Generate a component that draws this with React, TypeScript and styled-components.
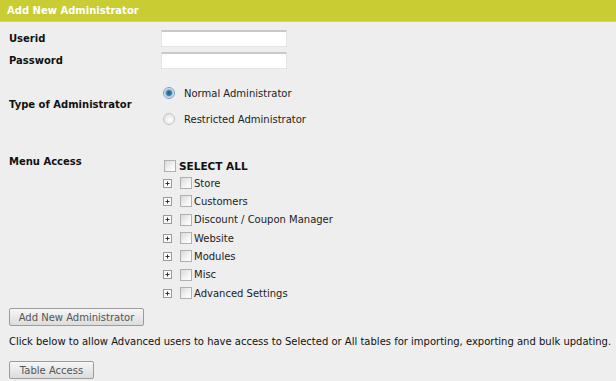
import React, { useState } from 'react'
import styled, { createGlobalStyle } from 'styled-components'

const GlobalStyle = createGlobalStyle`
  html, body {
    margin: 0;
    padding: 0;
    background: #eeeeee;
  }
  body {
    font-family: Tahoma, "DejaVu Sans", Verdana, sans-serif;
    font-size: 10px;
    color: #1a1a1a;
  }
`

const MENU_ITEMS = [
  'Store',
  'Customers',
  'Discount / Coupon Manager',
  'Website',
  'Modules',
  'Misc',
  'Advanced Settings'
]

export default function App() {
  const [adminType, setAdminType] = useState<'normal' | 'restricted'>('normal')
  const [checked, setChecked] = useState<Record<string, boolean>>({})

  const toggle = (key: string) => {
    setChecked(prev => ({ ...prev, [key]: !prev[key] }))
  }

  return (
    <Page>
      <GlobalStyle />
      <TitleBar>Add New Administrator</TitleBar>

      <Form>
        <Row $top={8}>
          <Label>Userid</Label>
          <TextInput type="text" />
        </Row>

        <Row $top={5}>
          <Label>Password</Label>
          <TextInput type="password" />
        </Row>

        <Row $top={11}>
          <Label $lift={4}>Type of Administrator</Label>
          <Field>
            <RadioLine onClick={() => setAdminType('normal')}>
              <Radio $checked={adminType === 'normal'} />
              Normal Administrator
            </RadioLine>
            <RadioLine onClick={() => setAdminType('restricted')}>
              <Radio $checked={adminType === 'restricted'} />
              Restricted Administrator
            </RadioLine>
          </Field>
        </Row>

        <Row $top={23} $alignTop>
          <Label $lineHeight={13}>Menu Access</Label>
          <Field $padTop={2}>
            <SelectAllLine onClick={() => toggle('all')}>
              <CheckBox $checked={!!checked.all} />
              SELECT ALL
            </SelectAllLine>
            {MENU_ITEMS.map(item => (
              <TreeLine key={item}>
                <Expander>
                  <svg width="9" height="9" viewBox="0 0 9 9">
                    <rect x="0.5" y="0.5" width="8" height="8" fill="#fafafa" stroke="#9a9a9a" />
                    <path d="M2.5 4.5h4M4.5 2.5v4" stroke="#333" strokeWidth="1" />
                  </svg>
                </Expander>
                <TreeItem onClick={() => toggle(item)}>
                  <CheckBox $checked={!!checked[item] || !!checked.all} />
                  {item}
                </TreeItem>
              </TreeLine>
            ))}
          </Field>
        </Row>

        <Button $top={6} $width={135}>Add New Administrator</Button>

        <Note>
          Click below to allow Advanced users to have access to Selected or All tables for importing, exporting and bulk updating.
        </Note>

        <Button $top={12} $width={85}>Table Access</Button>
      </Form>
    </Page>
  )
}

const Page = styled.div`
  width: 616px;
  min-height: 381px;
  background: #eeeeee;
`

const TitleBar = styled.div`
  height: 21px;
  line-height: 21px;
  padding-left: 7px;
  background: #c9cd33;
  border-bottom: 1px solid #d3d56a;
  color: #ffffff;
  font-weight: bold;
  font-size: 10px;
`

const Form = styled.div`
  display: flex;
  flex-direction: column;
  align-items: flex-start;
  padding-left: 9px;
`

const Row = styled.div<{ $top: number; $alignTop?: boolean }>`
  display: flex;
  align-items: ${p => (p.$alignTop ? 'flex-start' : 'center')};
  margin-top: ${p => p.$top}px;
`

const Label = styled.div<{ $lineHeight?: number; $lift?: number }>`
  width: 152px;
  font-weight: bold;
  color: #111;
  line-height: ${p => (p.$lineHeight ? `${p.$lineHeight}px` : 'normal')};
  padding-bottom: ${p => p.$lift || 0}px;
`

const Field = styled.div<{ $padTop?: number }>`
  display: flex;
  flex-direction: column;
  padding-top: ${p => p.$padTop || 0}px;
`

const TextInput = styled.input`
  box-sizing: border-box;
  width: 126px;
  height: 17px;
  margin: 0;
  padding: 0 3px;
  background: #ffffff;
  border: 1px solid #e4e4e4;
  border-top: 2px solid #c8c8c8;
  outline: none;
  font: inherit;
`

const RadioLine = styled.div`
  display: flex;
  align-items: center;
  height: 26px;
  padding-left: 2px;
  gap: 9px;
  color: #222;
  cursor: pointer;
`

const Radio = styled.span<{ $checked: boolean }>`
  box-sizing: border-box;
  width: 12px;
  height: 12px;
  border-radius: 50%;
  border: 1px solid ${p => (p.$checked ? '#7f9db9' : '#c4c4c4')};
  background: ${p =>
    p.$checked
      ? 'radial-gradient(circle, #1e5a86 0, #3d7fae 2.5px, #9ec3dd 3.5px, #e6eef4 5px)'
      : 'radial-gradient(circle at 60% 60%, #ffffff 0, #e4e4e4 6px)'};
`

const SelectAllLine = styled.div`
  display: flex;
  align-items: center;
  height: 17px;
  padding-left: 3px;
  gap: 3px;
  font-weight: bold;
  font-size: 10.5px;
  color: #111;
  cursor: pointer;
`

const CheckBox = styled.span<{ $checked: boolean }>`
  box-sizing: border-box;
  position: relative;
  width: 12px;
  height: 12px;
  border: 1px solid #b0b0b0;
  background: linear-gradient(135deg, #d8d8d8 0%, #f4f4f4 60%, #ffffff 100%);

  &::after {
    content: '';
    display: ${p => (p.$checked ? 'block' : 'none')};
    position: absolute;
    left: 3px;
    top: 0px;
    width: 3px;
    height: 7px;
    border: solid #333;
    border-width: 0 2px 2px 0;
    transform: rotate(45deg);
  }
`

const TreeLine = styled.div`
  display: flex;
  align-items: center;
  height: 18.33px;
  padding-left: 2px;
`

const Expander = styled.span`
  display: flex;
  width: 9px;
  height: 9px;
  margin-right: 8px;
`

const TreeItem = styled.span`
  display: flex;
  align-items: center;
  gap: 2px;
  color: #222;
  cursor: pointer;
`

const Button = styled.button<{ $top: number; $width: number }>`
  box-sizing: border-box;
  margin-top: ${p => p.$top}px;
  width: ${p => p.$width}px;
  height: 18px;
  padding: 0;
  border: 1px solid #9c9c9c;
  border-radius: 2px;
  background: linear-gradient(#f6f6f6, #dcdcdc);
  color: #555;
  font: inherit;
  cursor: pointer;
`

const Note = styled.div`
  margin-top: 9px;
  line-height: 14px;
  color: #111;
`
